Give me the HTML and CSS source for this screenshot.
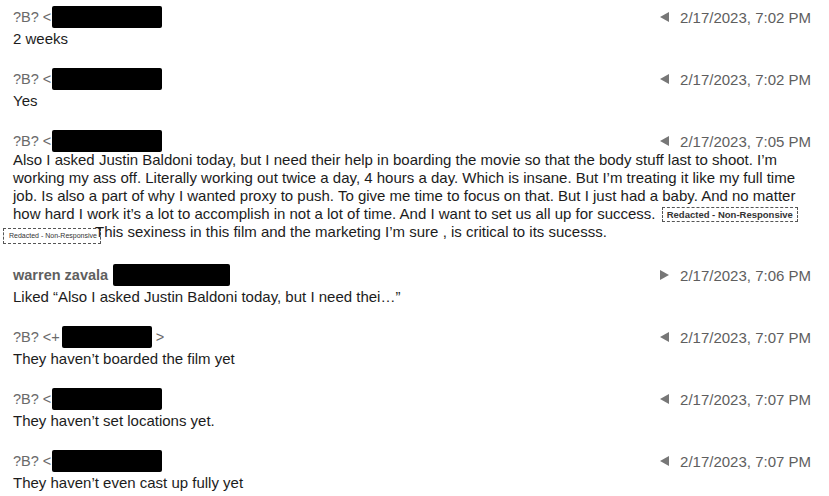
FILE: index.html
```html
<!DOCTYPE html>
<html>
<head>
<meta charset="utf-8">
<link rel="stylesheet" href="styles.css">
</head>
<body>
<div class="thread">
  <div class="msg">
    <div class="msg-head">
      <div class="sender">?B? &lt;<span class="black b1"></span></div>
      <div class="time"><svg class="tri" width="9" height="10" viewBox="0 0 9 10"><polygon points="9,0 9,10 0,5"/></svg>2/17/2023, 7:02 PM</div>
    </div>
    <div class="msg-body">2 weeks</div>
  </div>

  <div class="msg">
    <div class="msg-head">
      <div class="sender">?B? &lt;<span class="black b1"></span></div>
      <div class="time"><svg class="tri" width="9" height="10" viewBox="0 0 9 10"><polygon points="9,0 9,10 0,5"/></svg>2/17/2023, 7:02 PM</div>
    </div>
    <div class="msg-body">Yes</div>
  </div>

  <div class="msg">
    <div class="msg-head">
      <div class="sender">?B? &lt;<span class="black b1"></span></div>
      <div class="time"><svg class="tri" width="9" height="10" viewBox="0 0 9 10"><polygon points="9,0 9,10 0,5"/></svg>2/17/2023, 7:05 PM</div>
    </div>
    <div class="msg-body tight">Also I asked Justin Baldoni today, but I need their help in boarding the movie so that the body stuff last to shoot. I’m<br>working my ass off. Literally working out twice a day, 4 hours a day. Which is insane. But I’m treating it like my full time<br>job. Is also a part of why I wanted proxy to push. To give me time to focus on that. But I just had a baby. And no matter<br>how hard I work it’s a lot to accomplish in not a lot of time. And I want to set us all up for success. <span class="redact">Redacted - Non-Responsive</span><br><span class="redact small">Redacted - Non-Responsive</span>This sexiness in this film and the marketing I’m sure , is critical to its sucesss.</div>
  </div>

  <div class="msg">
    <div class="msg-head">
      <div class="sender strong">warren zavala<span class="black b2"></span></div>
      <div class="time"><svg class="tri" width="9" height="10" viewBox="0 0 9 10"><polygon points="0,0 0,10 9,5"/></svg>2/17/2023, 7:06 PM</div>
    </div>
    <div class="msg-body">Liked “Also I asked Justin Baldoni today, but I need thei…”</div>
  </div>

  <div class="msg">
    <div class="msg-head">
      <div class="sender">?B? &lt;+<span class="black b3"></span>&gt;</div>
      <div class="time"><svg class="tri" width="9" height="10" viewBox="0 0 9 10"><polygon points="9,0 9,10 0,5"/></svg>2/17/2023, 7:07 PM</div>
    </div>
    <div class="msg-body">They haven’t boarded the film yet</div>
  </div>

  <div class="msg">
    <div class="msg-head">
      <div class="sender">?B? &lt;<span class="black b1"></span></div>
      <div class="time"><svg class="tri" width="9" height="10" viewBox="0 0 9 10"><polygon points="9,0 9,10 0,5"/></svg>2/17/2023, 7:07 PM</div>
    </div>
    <div class="msg-body">They haven’t set locations yet.</div>
  </div>

  <div class="msg">
    <div class="msg-head">
      <div class="sender">?B? &lt;<span class="black b1"></span></div>
      <div class="time"><svg class="tri" width="9" height="10" viewBox="0 0 9 10"><polygon points="9,0 9,10 0,5"/></svg>2/17/2023, 7:07 PM</div>
    </div>
    <div class="msg-body">They haven’t even cast up fully yet</div>
  </div>
</div>
</body>
</html>
```
FILE: styles.css
```css
html, body {
  margin: 0;
  padding: 0;
  background: #ffffff;
}
body {
  font-family: "Liberation Sans", Arial, sans-serif;
  font-size: 15px;
  color: #1c1c1c;
  width: 829px;
  height: 496px;
  overflow: hidden;
}
.thread {
  display: flex;
  flex-direction: column;
  gap: 20px;
  padding: 6px 18px 0 13px;
}
.msg-head {
  display: flex;
  justify-content: space-between;
  align-items: center;
  height: 22px;
}
.sender {
  display: flex;
  align-items: center;
  color: #6a6a6a;
  font-size: 14.5px;
  white-space: nowrap;
}
.sender.strong {
  font-weight: bold;
  color: #5f5f5f;
}
.black {
  display: inline-block;
  height: 22px;
  background: #000;
  border-radius: 2px;
}
.b1 { width: 110px; margin-left: 1px; }
.b2 { width: 117px; margin-left: 5px; }
.b3 { width: 90px; margin-left: 2px; margin-right: 4px; }
.time {
  display: flex;
  align-items: center;
  color: #5e5e5e;
  font-size: 15px;
  white-space: nowrap;
}
.tri {
  fill: #777;
  margin-right: 11px;
}
.msg-body {
  margin-top: 2px;
  line-height: 18px;
  white-space: nowrap;
}
.msg-body.tight {
  margin-top: -1px;
}
.redact {
  display: inline-block;
  border: 1px dashed #555;
  font-size: 9.5px;
  font-weight: bold;
  line-height: 13px;
  padding: 0 4px;
  color: #333;
  vertical-align: 1px;
  margin-left: 2px;
}
.redact.small {
  font-size: 7px;
  font-weight: normal;
  line-height: 14px;
  width: 86px;
  padding: 0 5px;
  margin-left: -10px;
  margin-right: -6px;
  vertical-align: -1px;
}
```
